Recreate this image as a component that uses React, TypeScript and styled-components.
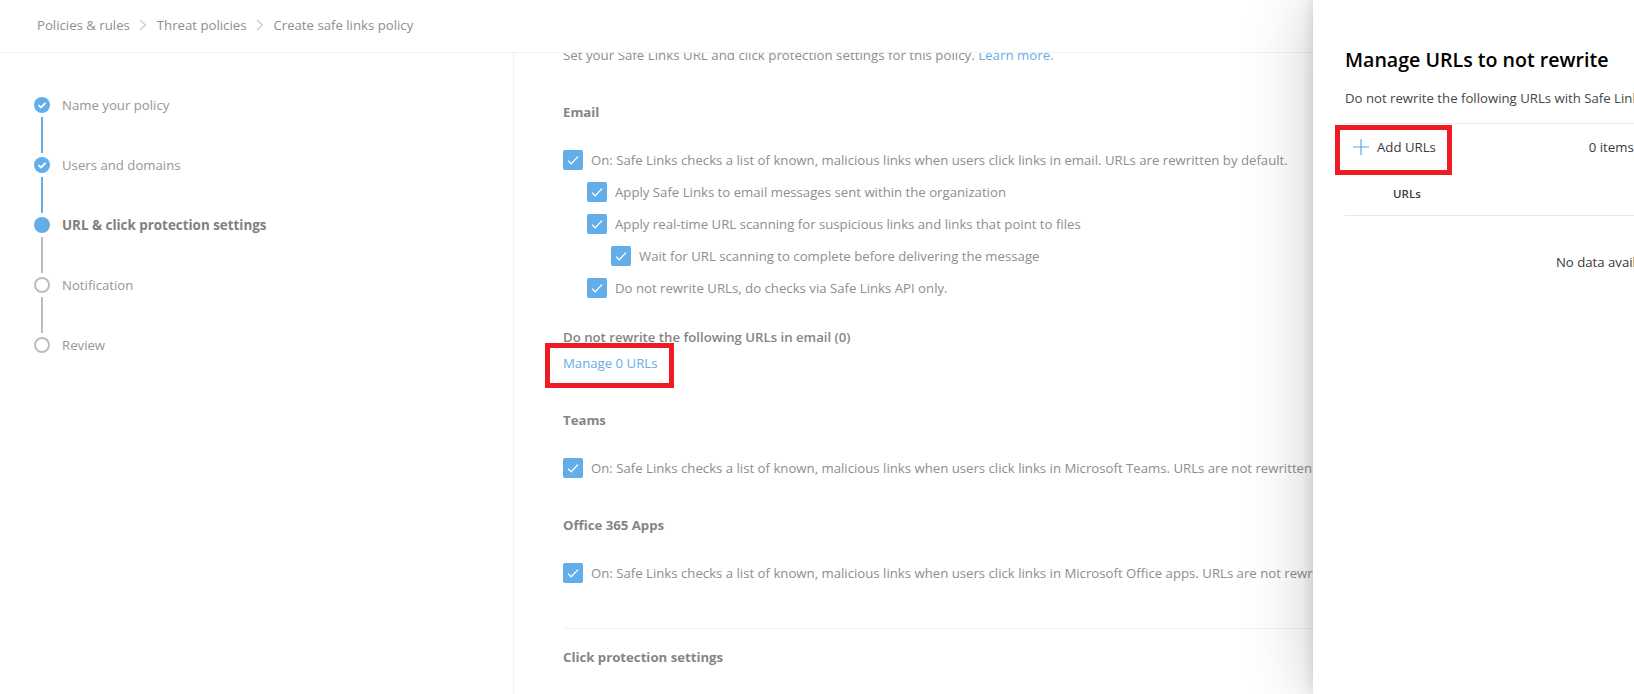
import { createGlobalStyle, styled } from 'styled-components'

const GlobalStyle = createGlobalStyle`
  html, body {
    margin: 0;
    padding: 0;
    background: #fff;
    font-family: 'Open Sans', 'Liberation Sans', sans-serif;
  }
`

const Page = styled.div`
  position: relative;
  width: 1634px;
  height: 694px;
  overflow: hidden;
  background: #fff;
  color: #8f8e8d;
  font-size: 13.2px;
`

const Header = styled.header`
  display: flex;
  align-items: center;
  height: 49px;
  padding: 0 0 3px 37px;
  gap: 9.5px;
  border-bottom: 1px solid #f1f1f1;
  box-sizing: content-box;
`

const Crumb = styled.span`
  color: #8f8e8d;
`

const Body = styled.div`
  display: grid;
  grid-template-columns: 514px 1fr;
  height: 641px;
`

const Sidebar = styled.nav`
  padding: 44px 0 0 34px;
  border-right: 1px solid #f1f1f1;
`

const Step = styled.div`
  display: flex;
  align-items: flex-start;
  gap: 12px;
  height: 60px;
`

const StepMarker = styled.div`
  display: flex;
  flex-direction: column;
  align-items: center;
  width: 16px;
  gap: 4px;
`

const Dot = styled.div<{ $state: 'done' | 'active' | 'todo' }>`
  display: flex;
  align-items: center;
  justify-content: center;
  box-sizing: border-box;
  width: 16px;
  height: 16px;
  border-radius: 50%;
  background: ${({ $state }) => ($state === 'todo' ? '#fff' : '#63ade9')};
  border: ${({ $state }) => ($state === 'todo' ? '2px solid #bdbdbd' : 'none')};
`

const Connector = styled.div<{ $done: boolean }>`
  width: 2px;
  height: 36px;
  background: ${({ $done }) => ($done ? '#63ade9' : '#bdbdbd')};
`

const StepLabel = styled.span<{ $active?: boolean }>`
  line-height: 16px;
  font-weight: ${({ $active }) => ($active ? 700 : 400)};
  font-size: ${({ $active }) => ($active ? '13.4px' : '13.2px')};
  color: ${({ $active }) => ($active ? '#808080' : '#979695')};
`

const Main = styled.main`
  overflow: hidden;
  padding-left: 49px;
  white-space: nowrap;
`

const Intro = styled.p`
  margin: -7px 0 0;
  line-height: 18px;
  font-size: 13.3px;
`

const Link = styled.a`
  color: #68ade6;
`

const SectionTitle = styled.h3<{ $top: number; $bottom: number }>`
  margin: ${({ $top, $bottom }) => `${$top}px 0 ${$bottom}px`};
  font-size: 13.2px;
  line-height: 18px;
  font-weight: 700;
  color: #858585;
`

const CheckRow = styled.div<{ $level?: number }>`
  display: flex;
  align-items: center;
  gap: 8px;
  height: 20px;
  margin-left: ${({ $level = 0 }) => $level * 24}px;
  margin-bottom: 12px;
`

const Box = styled.span`
  display: flex;
  flex: none;
  align-items: center;
  justify-content: center;
  width: 20px;
  height: 20px;
  border-radius: 2px;
  background: #63ade9;
`

const ManageBlock = styled.div`
  position: relative;
  margin-top: 30px;
  line-height: 18px;
`

const ManageTitle = styled.div`
  color: #858585;
  font-weight: 600;
  margin-bottom: 8px;
`

const Divider = styled.hr`
  margin: 45px 0 19px;
  border: 0;
  border-top: 1px solid #f1f1f1;
`

const RedBox = styled.div<{ $left: number; $top: number; $width: number; $height: number }>`
  position: absolute;
  left: ${({ $left }) => $left}px;
  top: ${({ $top }) => $top}px;
  width: ${({ $width }) => $width}px;
  height: ${({ $height }) => $height}px;
  box-sizing: border-box;
  border: 5px solid #ed1c24;
`

const Drawer = styled.aside`
  position: absolute;
  top: 0;
  left: 1313px;
  bottom: 0;
  width: 592px;
  padding: 48px 32px 0 32px;
  box-sizing: border-box;
  background: #fff;
  color: #3b3a39;
  box-shadow: 0 0 64px rgba(0, 0, 0, 0.22), 0 0 12px rgba(0, 0, 0, 0.14);
  white-space: nowrap;
`

const DrawerTitle = styled.h2`
  margin: 0;
  font-size: 19.6px;
  line-height: 24px;
  font-weight: 600;
  color: #000;
`

const DrawerText = styled.p`
  margin: 17px 0 0;
  line-height: 18px;
  color: #484644;
`

const Toolbar = styled.div`
  display: flex;
  align-items: center;
  height: 45px;
  margin-top: 16px;
  padding-left: 8px;
  gap: 8px;
  border-top: 1px solid #e8e8e8;
`

const ItemCount = styled.span`
  margin-left: 145px;
`

const TableHead = styled.div`
  height: 46px;
  line-height: 50px;
  padding-left: 48px;
  font-size: 11.5px;
  font-weight: 600;
  border-bottom: 1px solid #e8e8e8;
`

const Empty = styled.div`
  margin-top: 37px;
  text-align: center;
  line-height: 18px;
`

const CheckIcon = ({ size = 12 }: { size?: number }) => (
  <svg width={size} height={size} viewBox="0 0 12 12" fill="none">
    <path d="M1 6.6 L4.2 9.8 L11 2.6" stroke="#fff" strokeWidth={1.3} />
  </svg>
)

const Chevron = () => (
  <svg width={8} height={12} viewBox="0 0 8 12" fill="none">
    <path d="M1 1 L6.5 6 L1 11" stroke="#a8a8a8" strokeWidth={1} />
  </svg>
)

const steps: { label: string; state: 'done' | 'active' | 'todo' }[] = [
  { label: 'Name your policy', state: 'done' },
  { label: 'Users and domains', state: 'done' },
  { label: 'URL & click protection settings', state: 'active' },
  { label: 'Notification', state: 'todo' },
  { label: 'Review', state: 'todo' },
]

const Check = ({ level, children }: { level?: number; children: string }) => (
  <CheckRow $level={level}>
    <Box>
      <CheckIcon />
    </Box>
    <span>{children}</span>
  </CheckRow>
)

const App = () => (
  <Page>
    <GlobalStyle />
    <Header>
      <Crumb>Policies &amp; rules</Crumb>
      <Chevron />
      <Crumb>Threat policies</Crumb>
      <Chevron />
      <Crumb>Create safe links policy</Crumb>
    </Header>
    <Body>
      <Sidebar>
        {steps.map((step, i) => (
          <Step key={step.label}>
            <StepMarker>
              <Dot $state={step.state}>
                {step.state === 'done' && (
                  <svg width={10} height={10} viewBox="0 0 10 10" fill="none">
                    <path d="M1.5 5.2 L4 7.5 L8.6 2.8" stroke="#fff" strokeWidth={1.8} />
                  </svg>
                )}
              </Dot>
              {i < steps.length - 1 && <Connector $done={step.state === 'done'} />}
            </StepMarker>
            <StepLabel $active={step.state === 'active'}>{step.label}</StepLabel>
          </Step>
        ))}
      </Sidebar>
      <Main>
        <Intro>
          Set your Safe Links URL and click protection settings for this policy. <Link>Learn more.</Link>
        </Intro>
        <SectionTitle $top={39} $bottom={29}>Email</SectionTitle>
        <Check>On: Safe Links checks a list of known, malicious links when users click links in email. URLs are rewritten by default.</Check>
        <Check level={1}>Apply Safe Links to email messages sent within the organization</Check>
        <Check level={1}>Apply real-time URL scanning for suspicious links and links that point to files</Check>
        <Check level={2}>Wait for URL scanning to complete before delivering the message</Check>
        <Check level={1}>Do not rewrite URLs, do checks via Safe Links API only.</Check>
        <ManageBlock>
          <ManageTitle>Do not rewrite the following URLs in email (0)</ManageTitle>
          <Link>Manage 0 URLs</Link>
          <RedBox $left={-18} $top={15} $width={129} $height={45} />
        </ManageBlock>
        <SectionTitle $top={39} $bottom={29}>Teams</SectionTitle>
        <Check>On: Safe Links checks a list of known, malicious links when users click links in Microsoft Teams. URLs are not rewritten.</Check>
        <SectionTitle $top={38} $bottom={29}>Office 365 Apps</SectionTitle>
        <Check>On: Safe Links checks a list of known, malicious links when users click links in Microsoft Office apps. URLs are not rewritten.</Check>
        <Divider />
        <SectionTitle $top={0} $bottom={0}>Click protection settings</SectionTitle>
      </Main>
    </Body>
    <Drawer>
      <DrawerTitle>Manage URLs to not rewrite</DrawerTitle>
      <DrawerText>Do not rewrite the following URLs with Safe Links.</DrawerText>
      <Toolbar>
        <svg width={16} height={16} viewBox="0 0 16 16" fill="none">
          <path d="M8 0 V16 M0 8 H16" stroke="#5ea6de" strokeWidth={1.2} />
        </svg>
        <span>Add URLs</span>
        <ItemCount>0 items</ItemCount>
      </Toolbar>
      <TableHead>URLs</TableHead>
      <Empty>No data available</Empty>
      <RedBox $left={22} $top={125} $width={117} $height={50} />
    </Drawer>
  </Page>
)

export default App
